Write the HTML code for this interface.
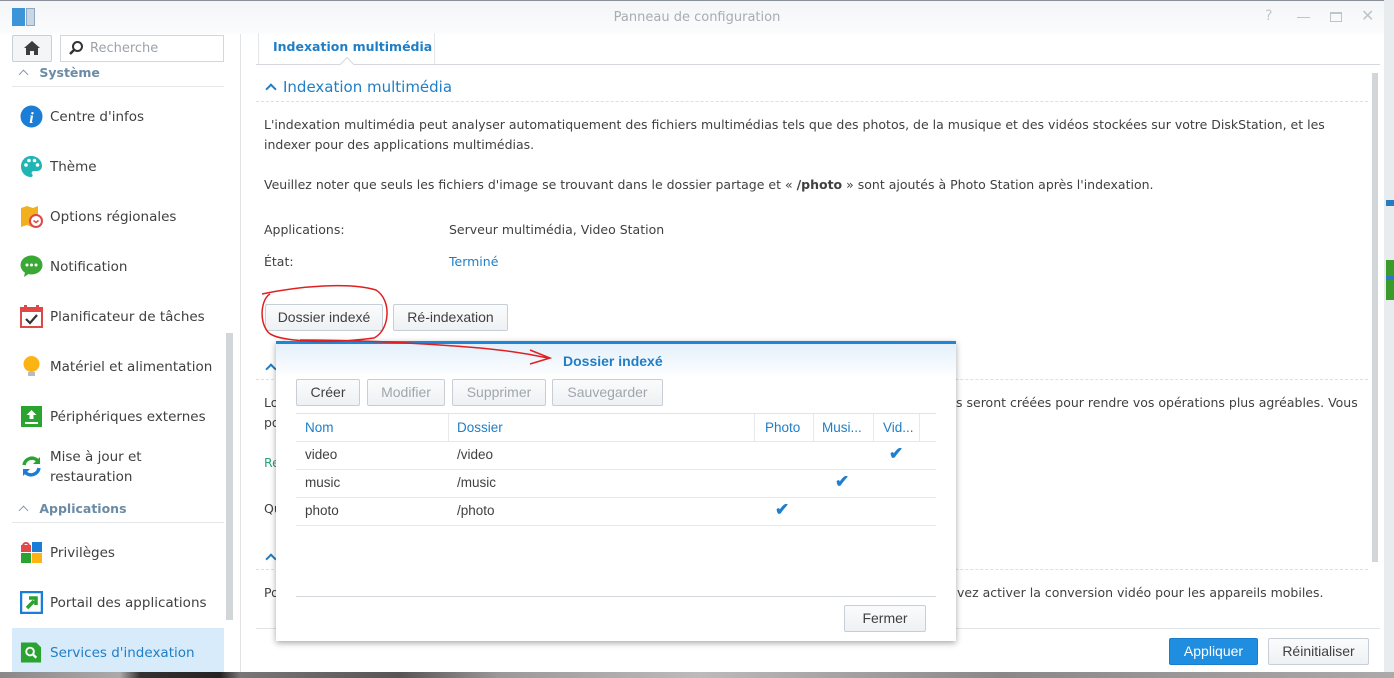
<!DOCTYPE html>
<html><head><meta charset="utf-8"><style>
*{box-sizing:border-box;margin:0;padding:0}
body{width:1394px;height:678px;overflow:hidden;position:relative;background:#fff;font-family:"DejaVu Sans","Liberation Sans",sans-serif;font-size:12.5px;color:#404040}
.a{position:absolute;white-space:nowrap}
.win{position:absolute;left:0;top:0;width:1384px;height:672px;background:#fff}
.title{position:absolute;left:0;top:0;width:1384px;height:34px;background:linear-gradient(#f3f5f7,#fbfcfd);border-top:1px solid #8a9099}
.side .it{position:absolute;left:50px;font-size:13.5px;color:#404040}
.ic{position:absolute;left:20px;width:23px;height:23px}
.hdr{position:absolute;left:20px;font-weight:bold;color:#6b8aa5;font-size:12.5px}
.btn{position:absolute;height:27px;border:1px solid #c7ced6;border-radius:2px;background:linear-gradient(#fafbfc,#eef1f4);text-align:center;line-height:25px;font-family:"Liberation Sans",sans-serif;font-size:14px;color:#404040}
.dis{color:#a0a6ad}
.dash{position:absolute;border-top:1px dashed #dcdfe3;height:0}
.dlg{position:absolute;left:276px;top:341px;width:680px;height:300px;background:#fff;border-top:3px solid #1e85d7;box-shadow:0 2px 6px rgba(0,0,0,.35);font-family:"Liberation Sans",sans-serif}
.th{color:#1f7ec5;font-size:13.5px}
.row{position:absolute;left:20px;width:640px;height:28px;border-bottom:1px solid #e6e8eb;font-size:13.5px;color:#404040}
.chk{position:absolute;color:#1e7fd0;font-size:17px;font-weight:bold}
.chev{display:inline-block;width:8px;height:8px;border-left:2px solid currentColor;border-top:2px solid currentColor;transform:rotate(45deg);margin-right:8px;position:relative;top:1px}
</style></head><body>
<div style="position:absolute;left:0;top:672px;width:1394px;height:6px;background:linear-gradient(90deg,#888 0,#aaa 120px,#333 140px,#222 220px,#777 240px,#555 400px,#999 500px,#bbb 700px,#888 1000px,#aaa 1394px)"></div>
<div style="position:absolute;left:1384px;top:0;width:10px;height:672px;background:#e9ecef"></div>
<div style="position:absolute;left:1386px;top:260px;width:8px;height:40px;background:#3a9a2a"></div>
<div style="position:absolute;left:1386px;top:200px;width:8px;height:6px;background:#2a7ac0"></div>
<div style="position:absolute;left:1386px;top:276px;width:8px;height:4px;background:#2a7ac0"></div>
<div class="win">
<div class="title">
  <div class="a" style="left:12px;top:7px;width:13px;height:18px;background:#3d95d9"></div>
  <div class="a" style="left:26px;top:7px;width:9px;height:18px;background:#c9d7e4;border:1px solid #8fa8bf"></div>
  <div class="a" style="left:0;width:1394px;top:9px;text-align:center;font-size:13px;color:#a7adb3">Panneau de configuration</div>
  <div class="a" style="left:1265px;top:7px;color:#c4c8cc;font-size:14px">?</div>
  <div class="a" style="left:1297px;top:16px;width:13px;border-top:1px solid #bfc4c9"></div>
  <div class="a" style="left:1330px;top:11px;width:12px;height:10px;border:1px solid #bfc4c9;border-top-width:2px"></div>
  <div class="a" style="left:1361px;top:5px;color:#bfc4c9;font-size:16px">✕</div>
</div>
<div class="side">
  <div class="a" style="left:12px;top:35px;width:40px;height:27px;border:1px solid #c7ced6;border-radius:2px;background:#f3f5f7"></div>
  <svg class="a" style="left:23px;top:40px" width="18" height="16" viewBox="0 0 18 16"><path d="M9 1L1 8h2v7h4v-4h4v4h4V8h2z" fill="#3d3d3d"/></svg>
  <div class="a" style="left:60px;top:35px;width:164px;height:27px;border:1px solid #d2d7dc;background:#fff"></div>
  <svg class="a" style="left:68px;top:40px" width="16" height="16" viewBox="0 0 16 16"><circle cx="9.5" cy="6.5" r="4.5" fill="none" stroke="#333" stroke-width="2"/><path d="M6 10l-4 4" stroke="#333" stroke-width="2.5"/></svg>
  <div class="a" style="left:90px;top:41px;color:#9ca3aa;font-size:13px">Recherche</div>
  <div class="hdr" style="top:65px"><span class="chev" style="color:#8a9aa8;width:7px;height:7px;border-width:1.5px"></span> Système</div>
  <div class="a" style="left:12px;top:86px;width:212px;border-top:1px solid #e4e7ea"></div>
  <svg class="ic" style="top:105px" viewBox="0 0 23 23"><circle cx="11.5" cy="11.5" r="11" fill="#1a7dd6"/><text x="11.5" y="18" font-family="Liberation Serif" font-style="italic" font-weight="bold" font-size="16" fill="#fff" text-anchor="middle">i</text></svg>
  <div class="it" style="top:109px">Centre d'infos</div>
  <svg class="ic" style="top:155px" viewBox="0 0 23 23"><path d="M11 1C5 1 1 6 1 11.5S5 22 11 22c2 0 2-2 1-3s0-3 2-3h3c3 0 5-2 5-5C22 5 17 1 11 1z" fill="#1fb5b5"/><circle cx="6" cy="10" r="1.8" fill="#fff"/><circle cx="9" cy="5.5" r="1.8" fill="#fff"/><circle cx="14.5" cy="5.5" r="1.8" fill="#fff"/><circle cx="17.5" cy="10" r="1.8" fill="#fff"/></svg>
  <div class="it" style="top:159px">Thème</div>
  <svg class="ic" style="top:205px" viewBox="0 0 23 23"><path d="M1 3l6-2 6 2 5-2v10H13l-1 11-5-2-6 2z" fill="#f2b01e"/><circle cx="16" cy="16" r="6" fill="#fff" stroke="#e04848" stroke-width="2"/><path d="M13.5 15.5l2.5 2 2.5-2" fill="none" stroke="#e04848" stroke-width="1.5"/></svg>
  <div class="it" style="top:209px">Options régionales</div>
  <svg class="ic" style="top:255px" viewBox="0 0 23 23"><ellipse cx="11.5" cy="10" rx="11" ry="9.5" fill="#3aa835"/><path d="M5 17l-1 5 6-4z" fill="#3aa835"/><circle cx="7" cy="10" r="1.5" fill="#fff"/><circle cx="11.5" cy="10" r="1.5" fill="#fff"/><circle cx="16" cy="10" r="1.5" fill="#fff"/></svg>
  <div class="it" style="top:259px">Notification</div>
  <svg class="ic" style="top:305px" viewBox="0 0 23 23"><rect x="1" y="3" width="21" height="19" fill="#fff" stroke="#e04848" stroke-width="2"/><rect x="1" y="3" width="21" height="4" fill="#e04848"/><rect x="4" y="0" width="3" height="5" fill="#e04848"/><rect x="16" y="0" width="3" height="5" fill="#e04848"/><path d="M6 14l4 4 7-8" fill="none" stroke="#333" stroke-width="2.2"/></svg>
  <div class="it" style="top:309px">Planificateur de tâches</div>
  <svg class="ic" style="top:355px" viewBox="0 0 23 23"><circle cx="11.5" cy="9" r="8" fill="#fbb414"/><rect x="8" y="17" width="7" height="4" fill="#bbb"/></svg>
  <div class="it" style="top:359px">Matériel et alimentation</div>
  <svg class="ic" style="top:405px" viewBox="0 0 23 23"><rect x="1" y="1" width="21" height="21" fill="#2aa330"/><path d="M11.5 5l-5 5h3v4h4v-4h3z" fill="#fff"/><rect x="5" y="17" width="13" height="2" fill="#fff"/></svg>
  <div class="it" style="top:409px">Périphériques externes</div>
  <svg class="ic" style="top:455px" viewBox="0 0 23 23"><path d="M4 10a8 8 0 0 1 14-4" fill="none" stroke="#2aa330" stroke-width="3.5"/><path d="M20 2v7h-7z" fill="#2aa330"/><path d="M19 13a8 8 0 0 1-14 4" fill="none" stroke="#1a7dd6" stroke-width="3.5"/><path d="M3 21v-7h7z" fill="#1a7dd6"/></svg>
  <div class="it" style="top:449px">Mise à jour et</div>
  <div class="it" style="top:469px">restauration</div>
  <div class="hdr" style="top:501px"><span class="chev" style="color:#8a9aa8;width:7px;height:7px;border-width:1.5px"></span> Applications</div>
  <div class="a" style="left:12px;top:522px;width:212px;border-top:1px solid #e4e7ea"></div>
  <svg class="ic" style="top:541px" viewBox="0 0 23 23"><rect x="1" y="4" width="10" height="7" fill="#e04848"/><path d="M3 5a3 3 0 0 1 6 0" fill="none" stroke="#e04848" stroke-width="2"/><rect x="12" y="1" width="10" height="10" fill="#1a7dd6"/><rect x="1" y="12" width="10" height="10" fill="#2aa330"/><rect x="12" y="12" width="10" height="10" fill="#fbb414"/></svg>
  <div class="it" style="top:545px">Privilèges</div>
  <svg class="ic" style="top:591px" viewBox="0 0 23 23"><rect x="1" y="1" width="21" height="21" fill="#fff" stroke="#1a7dd6" stroke-width="2.5"/><path d="M7 17l7-7M9 7h7v7" fill="none" stroke="#2aa330" stroke-width="3.5"/></svg>
  <div class="it" style="top:595px">Portail des applications</div>
  <div class="a" style="left:12px;top:628px;width:212px;height:44px;background:#d8ebfb"></div>
  <svg class="ic" style="top:641px;width:22px" viewBox="0 0 23 23"><path d="M1 1h16l5 5v16H1z" fill="#2aa330"/><circle cx="10.5" cy="10.5" r="4" fill="none" stroke="#fff" stroke-width="2"/><path d="M13 13l4 4" stroke="#fff" stroke-width="2.5"/></svg>
  <div class="it" style="top:645px;color:#1f7ec5">Services d'indexation</div>
  <div class="a" style="left:226px;top:333px;width:7px;height:287px;background:#d3d6d9"></div>
</div>
<div class="a" style="left:240px;top:34px;height:638px;border-left:1px solid #e1e4e7"></div>
<div class="a" style="left:258px;top:33px;width:177px;height:31px;border-left:1px solid #e4e7ea;border-right:1px solid #e4e7ea"></div>
<div class="a" style="left:273px;top:39px;font-weight:bold;color:#1f7ec5;font-size:12.5px">Indexation multimédia</div>
<div class="a" style="left:256px;top:64px;width:1124px;border-top:1px solid #d5d9dd"></div>
<div class="a" style="left:342px;top:59px;width:10px;height:10px;background:#fff;border-left:1px solid #d5d9dd;border-top:1px solid #d5d9dd;transform:rotate(45deg)"></div>
<div class="a" style="left:267px;top:78px;font-size:15px;color:#1f7ec5"><span class="chev"></span>Indexation multimédia</div>
<div class="dash" style="left:256px;top:101px;width:1112px"></div>
<div class="a" style="left:264px;top:117px">L'indexation multimédia peut analyser automatiquement des fichiers multimédias tels que des photos, de la musique et des vidéos stockées sur votre DiskStation, et les</div>
<div class="a" style="left:264px;top:137px">indexer pour des applications multimédias.</div>
<div class="a" style="left:264px;top:177px">Veuillez noter que seuls les fichiers d'image se trouvant dans le dossier partage et « <b>/photo</b> » sont ajoutés à Photo Station après l'indexation.</div>
<div class="a" style="left:264px;top:222px">Applications:</div>
<div class="a" style="left:449px;top:222px">Serveur multimédia, Video Station</div>
<div class="a" style="left:264px;top:254px">État:</div>
<div class="a" style="left:449px;top:254px;color:#1f7ec5">Terminé</div>
<div class="btn" style="left:265px;top:304px;width:118px">Dossier indexé</div>
<div class="btn" style="left:393px;top:304px;width:115px">Ré-indexation</div>
<div class="a" style="left:267px;top:360px;color:#1f7ec5"><span class="chev"></span></div>
<div class="dash" style="left:256px;top:379px;width:1112px"></div>
<div class="a" style="left:264px;top:395px">Lo</div><div class="a" style="left:264px;top:415px">po</div>
<div class="a" style="left:956px;top:395px">s seront créées pour rendre vos opérations plus agréables. Vous</div>
<div class="a" style="left:264px;top:455px;color:#2aa37a">Re</div>
<div class="a" style="left:264px;top:501px">Qu</div>
<div class="a" style="left:267px;top:550px;color:#1f7ec5"><span class="chev"></span></div>
<div class="dash" style="left:256px;top:569px;width:1112px"></div>
<div class="a" style="left:264px;top:585px">Po</div>
<div class="a" style="left:957px;top:585px">vez activer la conversion vidéo pour les appareils mobiles.</div>
<div class="a" style="left:1372px;top:73px;width:6px;height:489px;background:#d3d6d9"></div>
<div class="a" style="left:256px;top:628px;width:1124px;border-top:1px solid #e1e4e7"></div>
<div class="btn" style="left:1169px;top:638px;width:89px;background:#1f8de0;border-color:#1a7ccc;color:#fff">Appliquer</div>
<div class="btn" style="left:1268px;top:638px;width:101px">Réinitialiser</div>
<div class="dlg">
  <div class="a" style="left:0;top:0;width:680px;height:34px;background:linear-gradient(#e4f0fb,#fff)"></div>
  <div class="a" style="left:287px;top:9px;font-weight:bold;color:#1f7ec5;font-size:14px">Dossier indexé</div>
  <div class="btn" style="left:20px;top:35px;width:64px">Créer</div>
  <div class="btn dis" style="left:91px;top:35px;width:78px">Modifier</div>
  <div class="btn dis" style="left:176px;top:35px;width:94px">Supprimer</div>
  <div class="btn dis" style="left:276px;top:35px;width:111px">Sauvegarder</div>
  <div class="row" style="top:69px;height:29px;border-top:1px solid #e1e4e7">
    <span class="a th" style="left:9px;top:6px">Nom</span>
    <span class="a th" style="left:161px;top:6px">Dossier</span>
    <span class="a th" style="left:469px;top:6px">Photo</span>
    <span class="a th" style="left:526px;top:6px">Musi...</span>
    <span class="a th" style="left:587px;top:6px">Vid...</span>
    <span class="a" style="left:152px;top:0;height:28px;border-left:1px solid #e6e8eb"></span>
    <span class="a" style="left:458px;top:0;height:28px;border-left:1px solid #e6e8eb"></span>
    <span class="a" style="left:517px;top:0;height:28px;border-left:1px solid #e6e8eb"></span>
    <span class="a" style="left:577px;top:0;height:28px;border-left:1px solid #e6e8eb"></span>
    <span class="a" style="left:623px;top:0;height:28px;border-left:1px solid #e6e8eb"></span>
  </div>
  <div class="row" style="top:98px"><span class="a" style="left:9px;top:5px">video</span><span class="a" style="left:161px;top:5px">/video</span><span class="chk" style="left:593px;top:2px">✔</span></div>
  <div class="row" style="top:126px"><span class="a" style="left:9px;top:5px">music</span><span class="a" style="left:161px;top:5px">/music</span><span class="chk" style="left:539px;top:2px">✔</span></div>
  <div class="row" style="top:154px"><span class="a" style="left:9px;top:5px">photo</span><span class="a" style="left:161px;top:5px">/photo</span><span class="chk" style="left:479px;top:2px">✔</span></div>
  <div class="a" style="left:20px;top:252px;width:640px;border-top:1px solid #d5d9dd"></div>
  <div class="btn" style="left:568px;top:261px;width:82px">Fermer</div>
</div>
<svg class="a" style="left:0;top:0" width="1394" height="678" viewBox="0 0 1394 678">
<path d="M270 294C262 298 258 320 268 332C276 342 330 344 374 338C390 330 392 300 376 290C350 282 300 286 262 294" fill="none" stroke="#e02020" stroke-width="1.5"/>
<path d="M300 340C360 340 420 343 480 348C500 350 520 352 548 358M530 350L550 358L530 364" fill="none" stroke="#e02020" stroke-width="1.5"/>
</svg>
</div>
</body></html>
